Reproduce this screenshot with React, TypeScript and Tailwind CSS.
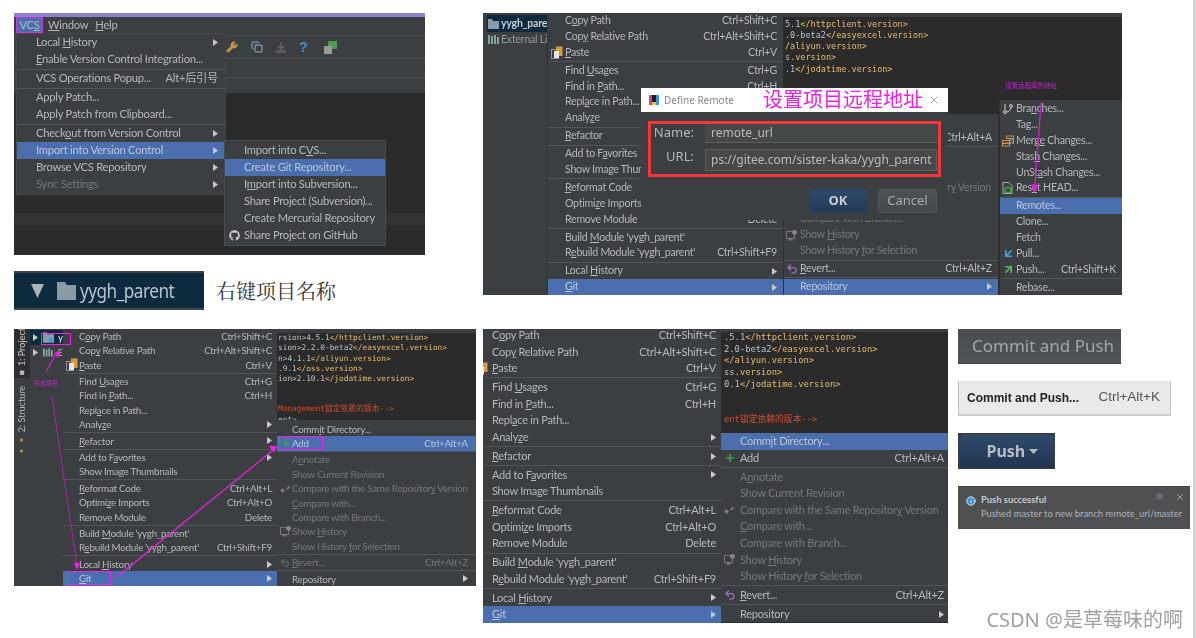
import React, { ReactNode } from "react";
import { FaGithub } from "react-icons/fa";
import { Plus, Undo2, ArrowUpRight, ArrowDownLeft, X, Settings, Info, GitBranch, Copy, Wrench } from "lucide-react";

type It = { t: string; k?: string; sub?: boolean; dis?: boolean; hl?: boolean; icon?: ReactNode } | null;

const Label = ({ t }: { t: string }) => {
  const i = t.indexOf("&");
  if (i < 0) return <>{t}</>;
  return (
    <>
      {t.slice(0, i)}
      <span className="underline underline-offset-1 decoration-[0.5px]">{t[i + 1]}</span>
      {t.slice(i + 2)}
    </>
  );
};

const Tri = () => (
  <svg width="5" height="7" viewBox="0 0 5 7" className="shrink-0">
    <polygon points="0,0 5,3.5 0,7" fill="#c8c8c8" />
  </svg>
);

function Menu({ items, className, row, sep, text, icon, end }: { items: It[]; className: string; row: string; sep: string; text: string; icon: string; end: string }) {
  return (
    <div className={`bg-[#3c3f41] font-['Lato','Noto_Sans_CJK_SC',sans-serif] ${className}`}>
      {items.map((it, i) =>
        it === null ? (
          <div key={i} className={`${sep} flex items-center`}>
            <div className="h-px w-full bg-[#50555a]" />
          </div>
        ) : (
          <div key={i} className={`${row} relative flex items-center whitespace-nowrap ${text} ${end} ${it.hl ? "bg-[#4b6eaf]" : ""} ${it.dis ? "text-[#75787a]" : it.hl ? "text-[#b9c6dc]" : "text-[#b5b8b9]"}`}>
            {it.icon && <span className={`absolute top-0 bottom-0 flex items-center ${icon}`}>{it.icon}</span>}
            <span className="flex-1"><Label t={it.t} /></span>
            {it.k && <span className={it.dis ? "text-[#75787a]" : ""}>{it.k}</span>}
            {it.sub && <Tri />}
          </div>
        )
      )}
    </div>
  );
}

const Paste = () => (
  <svg width="12" height="13" viewBox="0 0 12 13">
    <rect x="0.5" y="3.5" width="7" height="9" fill="#3c3f41" stroke="#9a9a9a" />
    <rect x="5" y="0.5" width="6.5" height="9.5" fill="#d99a3a" />
    <rect x="3" y="5" width="5" height="7" fill="#e6e6e6" />
  </svg>
);
const Spark = ({ c = "#7a7a7a" }: { c?: string }) => (
  <svg width="11" height="9" viewBox="0 0 11 9"><circle cx="2.5" cy="6.5" r="2" fill={c} /><path d="M5 6 L9 1.5 L10 4 Z" fill={c} /></svg>
);
const Hist = () => (
  <svg width="11" height="11" viewBox="0 0 11 11"><rect x="0.5" y="1.5" width="8" height="7" fill="none" stroke="#777" /><rect x="2.5" y="9" width="4" height="1.5" fill="#777" /><circle cx="8.5" cy="2.5" r="2.4" fill="#888" /></svg>
);
const Merge = () => (
  <svg width="12" height="12" viewBox="0 0 12 12"><rect x="0.5" y="5.5" width="7" height="2.5" fill="none" stroke="#c98f4a" /><rect x="0.5" y="8.5" width="7" height="2.5" fill="none" stroke="#c98f4a" /><rect x="4.5" y="1" width="7" height="2.5" fill="none" stroke="#c98f4a" /><rect x="7.5" y="5" width="4" height="3" fill="none" stroke="#aaa" /></svg>
);
const Reset = () => (
  <svg width="12" height="13" viewBox="0 0 12 13"><path d="M1 .5h6l3 3v8H1z" fill="none" stroke="#aaa" /><path d="M4 10.5a3 3 0 1 1 4 0H4" fill="none" stroke="#3fae49" strokeWidth="1.4" /></svg>
);

const plus = <Plus size={12} strokeWidth={3} color="#3ca64a" />;
const undoP = <Undo2 size={12} strokeWidth={2.5} color="#a26bc0" />;
const undoG = <Undo2 size={10} strokeWidth={2.5} color="#6a6d70" />;

const ctxMenu = (git: boolean): It[] => [
  { t: "C&opy Path", k: "Ctrl+Shift+C" },
  { t: "Cop&y Relative Path", k: "Ctrl+Alt+Shift+C" },
  { t: "&Paste", k: "Ctrl+V", icon: <Paste /> },
  null,
  { t: "Find &Usages", k: "Ctrl+G" },
  { t: "Find in &Path...", k: "Ctrl+H" },
  { t: "Repl&ace in Path..." },
  { t: "Analy&ze", sub: true },
  null,
  { t: "&Refactor", sub: true },
  null,
  { t: "Add to F&avorites", sub: true },
  { t: "Show Image Thumbnails" },
  null,
  { t: "&Reformat Code", k: "Ctrl+Alt+L" },
  { t: "Optimi&ze Imports", k: "Ctrl+Alt+O" },
  { t: "Remove Module", k: "Delete" },
  null,
  { t: "Build &Module 'yygh_parent'" },
  { t: "R&ebuild Module 'yygh_parent'", k: "Ctrl+Shift+F9" },
  null,
  { t: "Local &History", sub: true },
  { t: "&Git", sub: true, hl: git },
];

const gitMenu = (commitHl: boolean, addHl: boolean, repoHl: boolean, revert: ReactNode, addIcon: ReactNode): It[] => [
  { t: "Comm&it Directory...", hl: commitHl },
  { t: "Add", k: "Ctrl+Alt+A", hl: addHl, icon: addIcon },
  null,
  { t: "A&nnotate", dis: true },
  { t: "Show Current Revision", dis: true },
  { t: "Compare with the Same Repositor&y Version", dis: true, icon: <Spark /> },
  { t: "&Compare with...", dis: true },
  { t: "Compare with Branch...", dis: true },
  { t: "Show &History", dis: true, icon: <Hist /> },
  { t: "Show History &for Selection", dis: true },
  null,
  { t: "&Revert...", k: "Ctrl+Alt+Z", dis: revert === undoG, icon: revert },
  null,
  { t: "Repository", sub: true, hl: repoHl },
];

function Code({ lines, red, className, line, redMt }: { lines: [string, string][]; red?: [string, string]; className: string; line: string; redMt: string }) {
  return (
    <div className={`bg-[#2b2b2b] overflow-hidden whitespace-pre font-['DejaVu_Sans_Mono','Noto_Sans_CJK_SC',monospace] ${className}`}>
      {lines.map(([a, b], i) => (
        <div key={i} className={line}>
          <span className="text-[#b4c0cc]">{a}</span>
          <span className="text-[#e6bb6c]">{b}</span>
        </div>
      ))}
      {red && (
        <>
          <div className={`${line} ${redMt} text-[#d04e33]`}>{red[0]}</div>
          <div className={`${line} text-[#a9b7c6]`}>{red[1]}</div>
        </>
      )}
    </div>
  );
}

function ShotA() {
  const main: It[] = [
    { t: "Local &History", sub: true },
    { t: "&Enable Version Control Integration..." },
    null,
    { t: "VCS Operations Popup...", k: "Alt+后引号" },
    null,
    { t: "Apply Patch..." },
    { t: "Apply Patch from Clipboard..." },
    null,
    { t: "Check&out from Version Control", sub: true },
    { t: "Import into Version Control", sub: true, hl: true },
    { t: "Browse VCS Repository", sub: true },
    { t: "Sync Settings", sub: true, dis: true },
  ];
  const sub: It[] = [
    { t: "Import into C&VS..." },
    { t: "Create Git Repository...", hl: true },
    { t: "I&mport into Subversion..." },
    { t: "Share Project (Subversion)..." },
    { t: "Create Mercurial Repository" },
    { t: "Share Project on GitHub", icon: <FaGithub size={11} color="#c4c4c4" /> },
  ];
  return (
    <div className="relative w-[411px] h-[242px] overflow-hidden bg-[#3c3f41] blur-[0.3px] flex flex-col shrink-0">
      <div className="h-[4px] bg-[#8f80d2]" />
      <div className="h-[16px] flex items-center text-[11.2px] tracking-[-0.25px] text-[#b5b8b9] font-['Lato',sans-serif]">
        <span className="ml-[2px] w-[27px] h-[16px] flex items-center justify-center bg-[#4b6eaf] border border-[#c83ad8]">VC<u>S</u></span>
        <span className="ml-[5px]"><u>W</u>indow</span>
        <span className="ml-[7px]"><u>H</u>elp</span>
      </div>
      <div className="h-[60px] flex flex-col">
        <div className="h-[24px] mt-[2px] border-y border-[#4c4f51] flex items-center pl-[212px] gap-[13px]">
          <Wrench size={12} color="#c79a52" fill="#c79a52" />
          <Copy size={12} color="#8fb0c8" />
          <svg width="10" height="11" viewBox="0 0 10 11"><path d="M5 0v6M2 4l3 3 3-3M0 9h10v2H0z" fill="none" stroke="#666" strokeWidth="1.5" /></svg>
          <span className="text-[14px] font-bold text-[#3d8fd0] leading-none w-[12px] font-['Liberation_Sans',sans-serif]">?</span>
          <svg width="13" height="13" viewBox="0 0 13 13"><rect x="4" y="0" width="9" height="8" fill="#4f9a55" /><rect x="0" y="5" width="8" height="8" fill="#9a9a9a" /></svg>
        </div>
        <div className="h-[19px] border-b border-[#4c4f51]" />
      </div>
      <div className="flex-1 bg-[#2b2b2b] flex flex-col">
        <div className="h-[120px]" />
        <div className="h-[12px] bg-[#313335]" />
      </div>
      <Menu items={main} className="absolute left-[2px] top-[20px] w-[210px] pb-[1px] border border-[#45484a]" row="h-[17px]" sep="h-[2px]" text="pl-[19px] text-[11.2px] tracking-[-0.25px]" icon="left-[3px]" end="pr-[7px]" />
      <Menu items={sub} className="absolute left-[210px] top-[127px] w-[162px] py-[1px] border border-[#4a4d4f] z-10" row="h-[17px]" sep="h-[2px]" text="pl-[19px] text-[11.2px] tracking-[-0.25px]" icon="left-[4px]" end="pr-[2px]" />
    </div>
  );
}

function ShotB() {
  return (
    <div className="flex items-center mt-[16px]">
      <div className="w-[190px] h-[39px] bg-[#0d2a3f] border-y-2 border-[#3f4446] flex items-center blur-[0.3px] shrink-0 overflow-hidden">
        <svg width="13" height="14" viewBox="0 0 13 14" className="ml-[17px]"><polygon points="0,0 13,0 6.5,14" fill="#a9b3bb" /></svg>
        <svg width="19" height="18" viewBox="0 0 19 18" className="ml-[13px]"><path d="M0 0h8l2 3h9v15H0z" fill="#8a9aa7" /></svg>
        <span className="ml-[4px] text-[20px] leading-none text-[#b9c3ca] font-['Noto_Sans',sans-serif] tracking-[-0.6px] scale-x-[0.86] origin-left">yygh_parent</span>
      </div>
      <span className="ml-[12px] text-[20px] text-[#333] font-['Noto_Serif_CJK_SC','Noto_Sans_CJK_SC',serif]">右键项目名称</span>
    </div>
  );
}

function ShotC() {
  const right: It[] = [
    { t: "Bra&nches...", icon: <GitBranch size={12} color="#d0d0d0" /> },
    { t: "Tag..." },
    { t: "Merg&e Changes...", icon: <Merge /> },
    { t: "Stas&h Changes..." },
    { t: "UnSt&ash Changes..." },
    { t: "Res&et HEAD...", icon: <Reset /> },
    null,
    { t: "Remotes...", hl: true },
    { t: "Clone..." },
    { t: "Fetch" },
    { t: "Pull...", icon: <ArrowDownLeft size={13} strokeWidth={3} color="#3fa7e0" /> },
    { t: "Push...", k: "Ctrl+Shift+K", icon: <ArrowUpRight size={13} strokeWidth={3} color="#4fbf5f" /> },
    null,
    { t: "Rebase..." },
  ];
  return (
    <div className="relative w-[639px] h-[282px] overflow-hidden bg-[#3c3f41] flex blur-[0.3px] shrink-0">
      <div className="w-[64px] pt-[2px] font-['Lato',sans-serif] text-[10.5px] tracking-[-0.2px] overflow-hidden whitespace-nowrap shrink-0">
        <div className="h-[17px] ml-[4px] bg-[#0d2a3f] flex items-center gap-[2px] font-bold text-[#c5ccd2]">
          <svg width="11" height="10" viewBox="0 0 11 10" className="ml-[1px] shrink-0"><path d="M0 0h4l1 2h6v8H0z" fill="#8a9aa7" /></svg>
          yygh_pare
        </div>
        <div className="h-[15px] ml-[4px] flex items-center gap-[2px] text-[#999]">
          <svg width="11" height="9" viewBox="0 0 11 9" className="ml-[1px] shrink-0"><path d="M1 0v9M4 1v8M7 0v9M10 2v7" stroke="#7fa89a" strokeWidth="2" /></svg>
          External Li
        </div>
      </div>
      <Menu items={ctxMenu(true)} className="w-[236px] shrink-0 border-l border-[#2f3133]" row="h-[15.9px]" sep="h-[2px]" text="pl-[17px] text-[10.6px] tracking-[-0.25px]" icon="left-[3px]" end="pr-[6px]" />
      <div className="flex-1 flex flex-col">
        <div className="h-[4px] bg-[#3c3f41]" />
        <Code className="flex-1 pl-[2px] pt-[1.5px] text-[8.5px]" line="h-[11.3px] leading-[11.3px]" redMt="" lines={[
          ["5.1", "</httpclient.version>"],
          [".0-beta2", "</easyexcel.version>"],
          ["", "/aliyun.version>"],
          ["s", ".version>"],
          [".1", "</jodatime.version>"],
        ]} />
      </div>
      <Menu items={gitMenu(false, false, true, undoP, plus)} className="absolute left-[300px] top-[101px] w-[215px] border-l border-[#2f3133]" row="h-[15.9px]" sep="h-[2px]" text="pl-[16px] text-[10.6px] tracking-[-0.25px]" icon="left-[2px]" end="pr-[6px]" />
      <Menu items={right} className="absolute left-[516px] top-[87px] bottom-0 w-[123px] border-l border-[#2f3133] pt-[1px]" row="h-[15.9px]" sep="h-[2px]" text="pl-[16px] text-[10.6px] tracking-[-0.25px]" icon="left-[2px]" end="pr-[6px]" />

      <div className="absolute left-[158px] top-[75px] w-[307px] h-[132px] flex flex-col bg-[#3c3f41] font-['Noto_Sans','Noto_Sans_CJK_SC',sans-serif] z-10">
        <div className="h-[24px] bg-white flex items-center shrink-0 relative">
          <svg width="10" height="10" viewBox="0 0 10 10" className="ml-[8px]"><rect width="10" height="10" fill="#1b1b2f" /><rect x="0" y="0" width="3" height="10" fill="#e0456e" /><rect x="7" y="0" width="3" height="10" fill="#3d8fe0" /><rect x="3" y="7" width="4" height="3" fill="#f0c040" /></svg>
          <span className="ml-[5px] text-[10px] text-[#8a8a8a]">Define Remote</span>
          <span className="ml-[29px] text-[20px] leading-none text-[#f01ee0]">设置项目远程地址</span>
          <X size={12} color="#aaa" className="ml-[5px]" />
        </div>
        <div className="mt-[9px] ml-[7px] w-[293px] h-[56px] border-[3px] border-[#f43636] flex flex-col gap-[6px]">
          <div className="flex items-start h-[19px]">
            <span className="w-[43px] text-right text-[13px] leading-[16px] text-[#b5b8b9]">Name:</span>
            <div className="ml-[11px] w-[232px] h-[19px] bg-[#45494a] border-b border-[#5b5f61] text-[12px] text-[#bbb] px-[6px] flex items-center">remote_url</div>
          </div>
          <div className="flex items-start h-[22px]">
            <span className="w-[43px] text-right text-[13px] leading-[14px] text-[#b5b8b9]">URL:</span>
            <div className="ml-[11px] w-[232px] h-[22px] bg-[#45494a] border border-[#5b5f61] text-[12px] text-[#bbb] pl-[5px] flex items-center overflow-hidden whitespace-nowrap">ps://gitee.com/sister-kaka/yygh_parent</div>
          </div>
        </div>
        <div className="mt-[12px] ml-[168px] flex gap-[11px]">
          <div className="w-[58px] h-[24px] rounded-[3px] border border-[#2d4260] bg-gradient-to-b from-[#2e4a6b] to-[#243a56] flex items-center justify-center text-[13px] font-bold text-[#c8ccd0]">OK</div>
          <div className="w-[59px] h-[24px] rounded-[3px] border border-[#53575a] bg-gradient-to-b from-[#4d5153] to-[#45494a] flex items-center justify-center text-[13px] text-[#a9acae]">Cancel</div>
        </div>
      </div>

      <svg className="absolute inset-0 z-20 pointer-events-none" width="639" height="282" viewBox="0 0 639 282">
        <path d="M558 90 L552 172" stroke="#d020d8" strokeWidth="1.2" fill="none" />
        <polygon points="548,171 556,172 551,180" fill="#e020e0" />
      </svg>
      <span className="absolute left-[522px] top-[68px] text-[6.5px] leading-[8px] whitespace-nowrap text-[#d020d8] z-20 font-['Noto_Sans_CJK_SC',sans-serif]">设置远程库的地址</span>
    </div>
  );
}

function ShotD() {
  return (
    <div className="relative w-[462px] h-[257px] overflow-hidden bg-[#3c3f41] flex blur-[0.3px] shrink-0">
      <div className="w-[16px] shrink-0 flex flex-col items-center font-['Lato',sans-serif] text-[9px] text-[#b5b8b9] whitespace-nowrap">
        <div className="h-[49px] w-full bg-[#2d2f31] flex items-center justify-center overflow-hidden">
          <span className="[writing-mode:vertical-rl] rotate-180 font-semibold">■ 1: Project</span>
        </div>
        <div className="mt-[8px] flex items-center justify-center">
          <span className="[writing-mode:vertical-rl] rotate-180"><span className="text-[#c09a50]">▪▪</span> 2: Structure</span>
        </div>
      </div>
      <div className="w-[33px] shrink-0 text-[9px] text-[#aab] font-['Lato',sans-serif] pt-[1px] overflow-hidden whitespace-nowrap">
        <div className="h-[15px] bg-[#0d2a3f] flex items-center pl-[3px] gap-[5px]">
          <Tri />
          <svg width="12" height="11" viewBox="0 0 12 11"><path d="M0 0h4l1 2h7v9H0z" fill="#8a9aa7" /><rect x="6" y="6" width="4" height="4" fill="#2e9fe0" /></svg>
          <span className="text-white -ml-[1px]">y</span>
        </div>
        <div className="h-[15px] flex items-center pl-[3px] gap-[5px]">
          <Tri />
          <svg width="11" height="9" viewBox="0 0 11 9"><path d="M1 0v9M4 1v8M7 0v9M10 2v7" stroke="#7fa89a" strokeWidth="2" /></svg>
          <span>E</span>
        </div>
      </div>
      <Menu items={ctxMenu(true)} className="w-[214px] shrink-0" row="h-[14.4px]" sep="h-[2px]" text="pl-[16px] text-[9.8px] tracking-[-0.25px]" icon="left-[3px]" end="pr-[5px]" />
      <div className="flex-1 flex flex-col">
        <div className="h-[4px] bg-[#3c3f41]" />
        <Code className="flex-1 pl-[1px] pt-[0px] text-[7.8px]" line="h-[10.3px] leading-[10.3px]" redMt="mt-[20px]" lines={[
          ["rsion>4.5.1", "</httpclient.version>"],
          ["sion>2.2.0-beta2", "</easyexcel.version>"],
          ["n>4.1.1", "</aliyun.version>"],
          [".9.1", "</oss.version>"],
          ["ion>2.10.1", "</jodatime.version>"],
        ]} red={["Management锁定依赖的版本-->", "ent>"]} />
      </div>
      <Menu items={gitMenu(false, true, false, undoG, plus)} className="absolute left-[263px] top-[91px] w-[199px] pt-[1.8px]" row="h-[14.4px]" sep="h-[2px]" text="pl-[15px] text-[9.8px] tracking-[-0.25px]" icon="left-[3px]" end="pr-[8px]" />
      <div className="absolute left-[265px] top-[106.5px] w-[44px] h-[14.5px] border border-[#f020e8] z-10" />
      <div className="absolute left-[53px] top-[241.5px] w-[44px] h-[14.5px] border border-[#f020e8] z-10" />
      <div className="absolute left-[27px] top-[4px] w-[30px] h-[12px] border border-[#f020e8] z-10" />
      <span className="absolute left-[20px] top-[50px] text-[6px] leading-[8px] whitespace-nowrap text-[#d020d8] z-10 font-['Noto_Sans_CJK_SC',sans-serif]">右击项目</span>
      <svg className="absolute inset-0 z-20 pointer-events-none" width="462" height="257" viewBox="0 0 462 257">
        <path d="M32 43 L43 23" stroke="#f020e8" strokeWidth="1" fill="none" />
        <polygon points="40,24 46,22 44,29" fill="#f020e8" />
        <path d="M38 68 L63 236" stroke="#b020b8" strokeWidth="1" fill="none" />
        <polygon points="60,234 66,234 63,241" fill="#f020e8" />
        <path d="M104 247 L258 122" stroke="#f020e8" strokeWidth="1.2" fill="none" />
        <polygon points="255,117 263,117 260,124" fill="#f020e8" />
      </svg>
    </div>
  );
}

function ShotE() {
  return (
    <div className="relative w-[465px] h-[294px] overflow-hidden bg-[#3c3f41] flex blur-[0.3px] shrink-0">
      <Menu items={ctxMenu(true)} className="w-[238px] shrink-0 -mt-[2px] h-[298px]" row="h-[16.6px]" sep="h-[2.3px]" text="pl-[9px] text-[11px] tracking-[-0.25px]" icon="-left-[7px]" end="pr-[5px]" />
      <div className="flex-1 flex flex-col">
        <div className="h-[2.5px] bg-[#3c3f41]" />
        <Code className="flex-1 pl-[3px] pt-[0.5px] text-[8.8px]" line="h-[11.7px] leading-[11.7px]" redMt="mt-[24px]" lines={[
          [".5.1", "</httpclient.version>"],
          ["2.0-beta2", "</easyexcel.version>"],
          ["", "</aliyun.version>"],
          ["ss", ".version>"],
          ["0.1", "</jodatime.version>"],
        ]} red={["ent锁定依赖的版本-->", ""]} />
      </div>
      <Menu items={gitMenu(true, false, false, undoP, plus)} className="absolute left-[238px] top-[104px] w-[227px]" row="h-[16.6px]" sep="h-[2.3px]" text="pl-[19px] text-[11px] tracking-[-0.25px]" icon="left-[3px]" end="pr-[4px]" />
    </div>
  );
}

function Side() {
  return (
    <div className="flex flex-col ml-[10px] font-['Noto_Sans',sans-serif] blur-[0.3px]">
      <div className="w-[163px] h-[35px] bg-gradient-to-b from-[#4a4e50] to-[#505456] border-b border-[#3a3d3f] flex items-center pl-[14px] text-[17px] text-[#a2a6a8]">Commit and Push</div>
      <div className="mt-[17px] w-[213px] h-[35px] bg-[#e9e9e9] border-x border-[#c0c0c0] border-b-2 border-b-[#d4ccc8] flex items-center justify-between pl-[8px] pr-[10px] font-['Liberation_Sans',sans-serif]">
        <span className="text-[12px] font-semibold text-[#222]">Commit and Push...</span>
        <span className="text-[13.5px] text-[#555]">Ctrl+Alt+K</span>
      </div>
      <div className="mt-[17px] w-[97px] h-[36px] bg-[#3a3d3f] p-[1.5px]">
        <div className="w-full h-full rounded-[3px] bg-gradient-to-b from-[#2f4b6e] to-[#22344e] flex items-center pl-[27px] text-[16px] font-bold text-[#b5bdc5] gap-[4px]">
          Push
          <svg width="9" height="5" viewBox="0 0 9 5"><polygon points="0,0 9,0 4.5,5" fill="#b5bdc5" /></svg>
        </div>
      </div>
      <div className="mt-[17px] w-[232px] h-[43px] bg-[#4e5052] border-t border-[#3f4244] relative text-[9.4px] text-[#b0b3b5] pl-[23px] pt-[6px] leading-[14px] font-['Lato',sans-serif] whitespace-nowrap">
        <Info size={10} color="#fff" fill="#3a8fd0" className="absolute left-[8px] top-[9px]" />
        <div className="font-bold text-[#c8cacc]">Push successful</div>
        <div>Pushed master to new branch remote_url/master</div>
        <Settings size={9} color="#6a6d70" fill="#6a6d70" className="absolute right-[26px] top-[5px]" />
        <X size={10} color="#b0b3b5" className="absolute right-[5px] top-[5px]" />
      </div>
    </div>
  );
}

export default function App() {
  return (
    <div className="relative w-[1196px] h-[638px] overflow-hidden bg-white pt-[13px] pl-[14px] flex flex-col">
      <div className="flex h-[316px] shrink-0">
        <div className="w-[469px] shrink-0 flex flex-col">
          <ShotA />
          <ShotB />
        </div>
        <ShotC />
      </div>
      <div className="flex">
        <ShotD />
        <div className="w-[7px] shrink-0" />
        <ShotE />
        <Side />
      </div>
      <div className="absolute top-0 right-0 bottom-0 w-[3px] bg-[#d4d4d4]" />
      <span className="absolute right-[13px] top-[606px] text-[20px] leading-[27px] text-[#a0a0a0] whitespace-nowrap blur-[0.3px] font-['Noto_Sans','Noto_Sans_CJK_SC',sans-serif]">CSDN @是草莓味的啊</span>
    </div>
  );
}
